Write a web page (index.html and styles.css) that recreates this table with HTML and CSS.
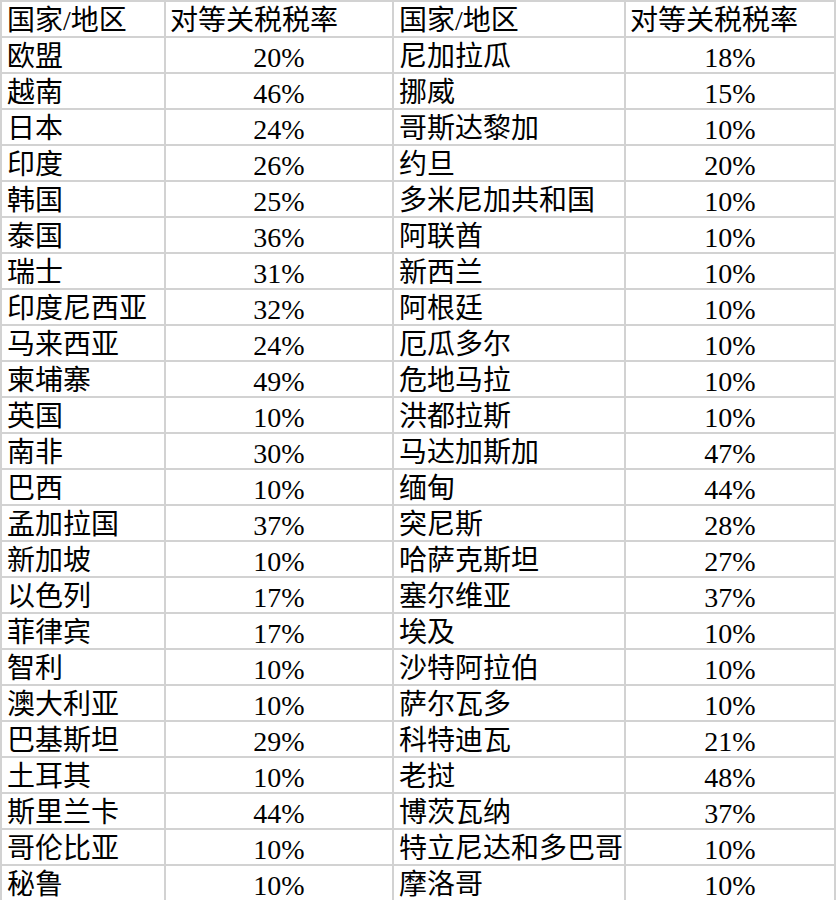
FILE: index.html
```html
<!DOCTYPE html>
<html lang="zh-CN">
<head>
<meta charset="utf-8">
<title>对等关税税率</title>
<link rel="stylesheet" href="styles.css">
</head>
<body>
<div class="sheet">
  <div class="cell name">国家/地区</div><div class="cell head">对等关税税率</div><div class="cell name">国家/地区</div><div class="cell head">对等关税税率</div>
  <div class="cell name">欧盟</div><div class="cell num">20%</div><div class="cell name">尼加拉瓜</div><div class="cell num">18%</div>
  <div class="cell name">越南</div><div class="cell num">46%</div><div class="cell name">挪威</div><div class="cell num">15%</div>
  <div class="cell name">日本</div><div class="cell num">24%</div><div class="cell name">哥斯达黎加</div><div class="cell num">10%</div>
  <div class="cell name">印度</div><div class="cell num">26%</div><div class="cell name">约旦</div><div class="cell num">20%</div>
  <div class="cell name">韩国</div><div class="cell num">25%</div><div class="cell name">多米尼加共和国</div><div class="cell num">10%</div>
  <div class="cell name">泰国</div><div class="cell num">36%</div><div class="cell name">阿联酋</div><div class="cell num">10%</div>
  <div class="cell name">瑞士</div><div class="cell num">31%</div><div class="cell name">新西兰</div><div class="cell num">10%</div>
  <div class="cell name">印度尼西亚</div><div class="cell num">32%</div><div class="cell name">阿根廷</div><div class="cell num">10%</div>
  <div class="cell name">马来西亚</div><div class="cell num">24%</div><div class="cell name">厄瓜多尔</div><div class="cell num">10%</div>
  <div class="cell name">柬埔寨</div><div class="cell num">49%</div><div class="cell name">危地马拉</div><div class="cell num">10%</div>
  <div class="cell name">英国</div><div class="cell num">10%</div><div class="cell name">洪都拉斯</div><div class="cell num">10%</div>
  <div class="cell name">南非</div><div class="cell num">30%</div><div class="cell name">马达加斯加</div><div class="cell num">47%</div>
  <div class="cell name">巴西</div><div class="cell num">10%</div><div class="cell name">缅甸</div><div class="cell num">44%</div>
  <div class="cell name">孟加拉国</div><div class="cell num">37%</div><div class="cell name">突尼斯</div><div class="cell num">28%</div>
  <div class="cell name">新加坡</div><div class="cell num">10%</div><div class="cell name">哈萨克斯坦</div><div class="cell num">27%</div>
  <div class="cell name">以色列</div><div class="cell num">17%</div><div class="cell name">塞尔维亚</div><div class="cell num">37%</div>
  <div class="cell name">菲律宾</div><div class="cell num">17%</div><div class="cell name">埃及</div><div class="cell num">10%</div>
  <div class="cell name">智利</div><div class="cell num">10%</div><div class="cell name">沙特阿拉伯</div><div class="cell num">10%</div>
  <div class="cell name">澳大利亚</div><div class="cell num">10%</div><div class="cell name">萨尔瓦多</div><div class="cell num">10%</div>
  <div class="cell name">巴基斯坦</div><div class="cell num">29%</div><div class="cell name">科特迪瓦</div><div class="cell num">21%</div>
  <div class="cell name">土耳其</div><div class="cell num">10%</div><div class="cell name">老挝</div><div class="cell num">48%</div>
  <div class="cell name">斯里兰卡</div><div class="cell num">44%</div><div class="cell name">博茨瓦纳</div><div class="cell num">37%</div>
  <div class="cell name">哥伦比亚</div><div class="cell num">10%</div><div class="cell name">特立尼达和多巴哥</div><div class="cell num">10%</div>
  <div class="cell name">秘鲁</div><div class="cell num">10%</div><div class="cell name">摩洛哥</div><div class="cell num">10%</div>
</div>
</body>
</html>
```

FILE: styles.css
```css
html, body {
  margin: 0;
  padding: 0;
  background: #ffffff;
}

.sheet {
  width: 832px;
  padding: 2px 2px 0 2px;
  background: #d2d2d2;
  display: grid;
  grid-template-columns: 162px 226px 230px 208px;
  grid-auto-rows: 34px;
  gap: 2px;
  font-family: "Liberation Serif", "Noto Sans CJK SC", serif;
  font-size: 28px;
  color: #000000;
}

.cell {
  background: #ffffff;
  height: 34px;
  line-height: 34px;
  overflow: hidden;
  white-space: nowrap;
  padding-top: 2px;
  box-sizing: border-box;
}

.name {
  padding-left: 5px;
}

.head {
  padding-left: 4px;
}

.num {
  text-align: center;
  padding-top: 3px;
}
```
